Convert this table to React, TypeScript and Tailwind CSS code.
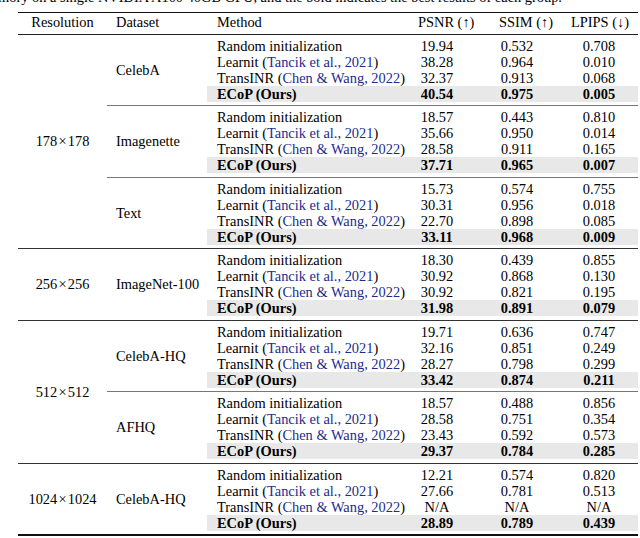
type Row = { method: string; cite?: string; psnr: string; ssim: string; lpips: string };
type Dataset = { name: string; rows: Row[] };
type Block = { res: string; sets: Dataset[] };

const base = (r: string, l: string, t: string, e: string): Row[] => [
  { method: 'Random initialization', psnr: r.split(' ')[0], ssim: r.split(' ')[1], lpips: r.split(' ')[2] },
  { method: 'Learnit', cite: 'Tancik et al., 2021', psnr: l.split(' ')[0], ssim: l.split(' ')[1], lpips: l.split(' ')[2] },
  { method: 'TransINR', cite: 'Chen & Wang, 2022', psnr: t.split(' ')[0], ssim: t.split(' ')[1], lpips: t.split(' ')[2] },
  { method: 'ECoP (Ours)', psnr: e.split(' ')[0], ssim: e.split(' ')[1], lpips: e.split(' ')[2] },
];

const blocks: Block[] = [
  {
    res: '178\u200A×\u200A178',
    sets: [
      { name: 'CelebA', rows: base('19.94 0.532 0.708', '38.28 0.964 0.010', '32.37 0.913 0.068', '40.54 0.975 0.005') },
      { name: 'Imagenette', rows: base('18.57 0.443 0.810', '35.66 0.950 0.014', '28.58 0.911 0.165', '37.71 0.965 0.007') },
      { name: 'Text', rows: base('15.73 0.574 0.755', '30.31 0.956 0.018', '22.70 0.898 0.085', '33.11 0.968 0.009') },
    ],
  },
  {
    res: '256\u200A×\u200A256',
    sets: [
      { name: 'ImageNet-100', rows: base('18.30 0.439 0.855', '30.92 0.868 0.130', '30.92 0.821 0.195', '31.98 0.891 0.079') },
    ],
  },
  {
    res: '512\u200A×\u200A512',
    sets: [
      { name: 'CelebA-HQ', rows: base('19.71 0.636 0.747', '32.16 0.851 0.249', '28.27 0.798 0.299', '33.42 0.874 0.211') },
      { name: 'AFHQ', rows: base('18.57 0.488 0.856', '28.58 0.751 0.354', '23.43 0.592 0.573', '29.37 0.784 0.285') },
    ],
  },
  {
    res: '1024\u200A×\u200A1024',
    sets: [
      { name: 'CelebA-HQ', rows: base('12.21 0.574 0.820', '27.66 0.781 0.513', 'N/A N/A N/A', '28.89 0.789 0.439') },
    ],
  },
];

const cols = 'grid grid-cols-[193px_74px_86px_78px]';

function MethodRow({ row, ours }: { row: Row; ours: boolean }) {
  return (
    <div className={`${cols} h-[16px] items-center ${ours ? 'bg-[#e8e8e8] font-bold' : ''}`}>
      <div className="pl-[10px] whitespace-nowrap">
        {row.method}
        {row.cite && (
          <>
            {' ('}
            <span className="text-[#1b2c8e]">{row.cite}</span>
            {')'}
          </>
        )}
      </div>
      <div className="text-center">{row.psnr}</div>
      <div className="text-center">{row.ssim}</div>
      <div className="text-center">{row.lpips}</div>
    </div>
  );
}

export default function App() {
  return (
    <div className="w-[640px] h-[538px] overflow-hidden bg-white text-black font-['Liberation_Serif',serif] text-[14.4px] leading-[16px]">
      <div className="-mt-[11px] h-[16px] -ml-[2px] whitespace-nowrap">
        mory on a single NVIDIA A100 40GB GPU, and the bold indicates the best results of each group.
      </div>

      <div className="mt-[6.5px] ml-[18px] w-[620px] border-t-[1.5px] border-[#111] border-b-[2px]">
        {/* header */}
        <div className="flex h-[22px] items-center pb-[2px] border-b border-[#222]">
          <div className="w-[89px] text-center">Resolution</div>
          <div className="w-[100px] pl-[9px]">Dataset</div>
          <div className={cols}>
            <div className="pl-[10px]">Method</div>
            <div className="pl-[18px] text-center whitespace-nowrap">PSNR (↑)</div>
            <div className="pl-[18px] text-center whitespace-nowrap">SSIM (↑)</div>
            <div className="pl-[2px] text-center whitespace-nowrap">LPIPS (↓)</div>
          </div>
        </div>

        {blocks.map((b, bi) => (
          <div key={b.res} className={`flex ${bi > 0 ? 'border-t border-[#333]' : ''}`}>
            <div className="w-[89px] flex items-center justify-center whitespace-nowrap">{b.res}</div>
            <div className="flex-1 flex flex-col">
              {b.sets.map((s, si) => (
                <div
                  key={s.name}
                  className={`flex pt-[3px] pb-[3.5px] ${si > 0 ? 'border-t border-[#777]' : ''}`}
                >
                  <div className="w-[100px] pl-[9px] flex items-center whitespace-nowrap">{s.name}</div>
                  <div className="flex flex-col">
                    {s.rows.map((r, ri) => (
                      <MethodRow key={r.method} row={r} ours={ri === 3} />
                    ))}
                  </div>
                </div>
              ))}
            </div>
          </div>
        ))}
      </div>
    </div>
  );
}
